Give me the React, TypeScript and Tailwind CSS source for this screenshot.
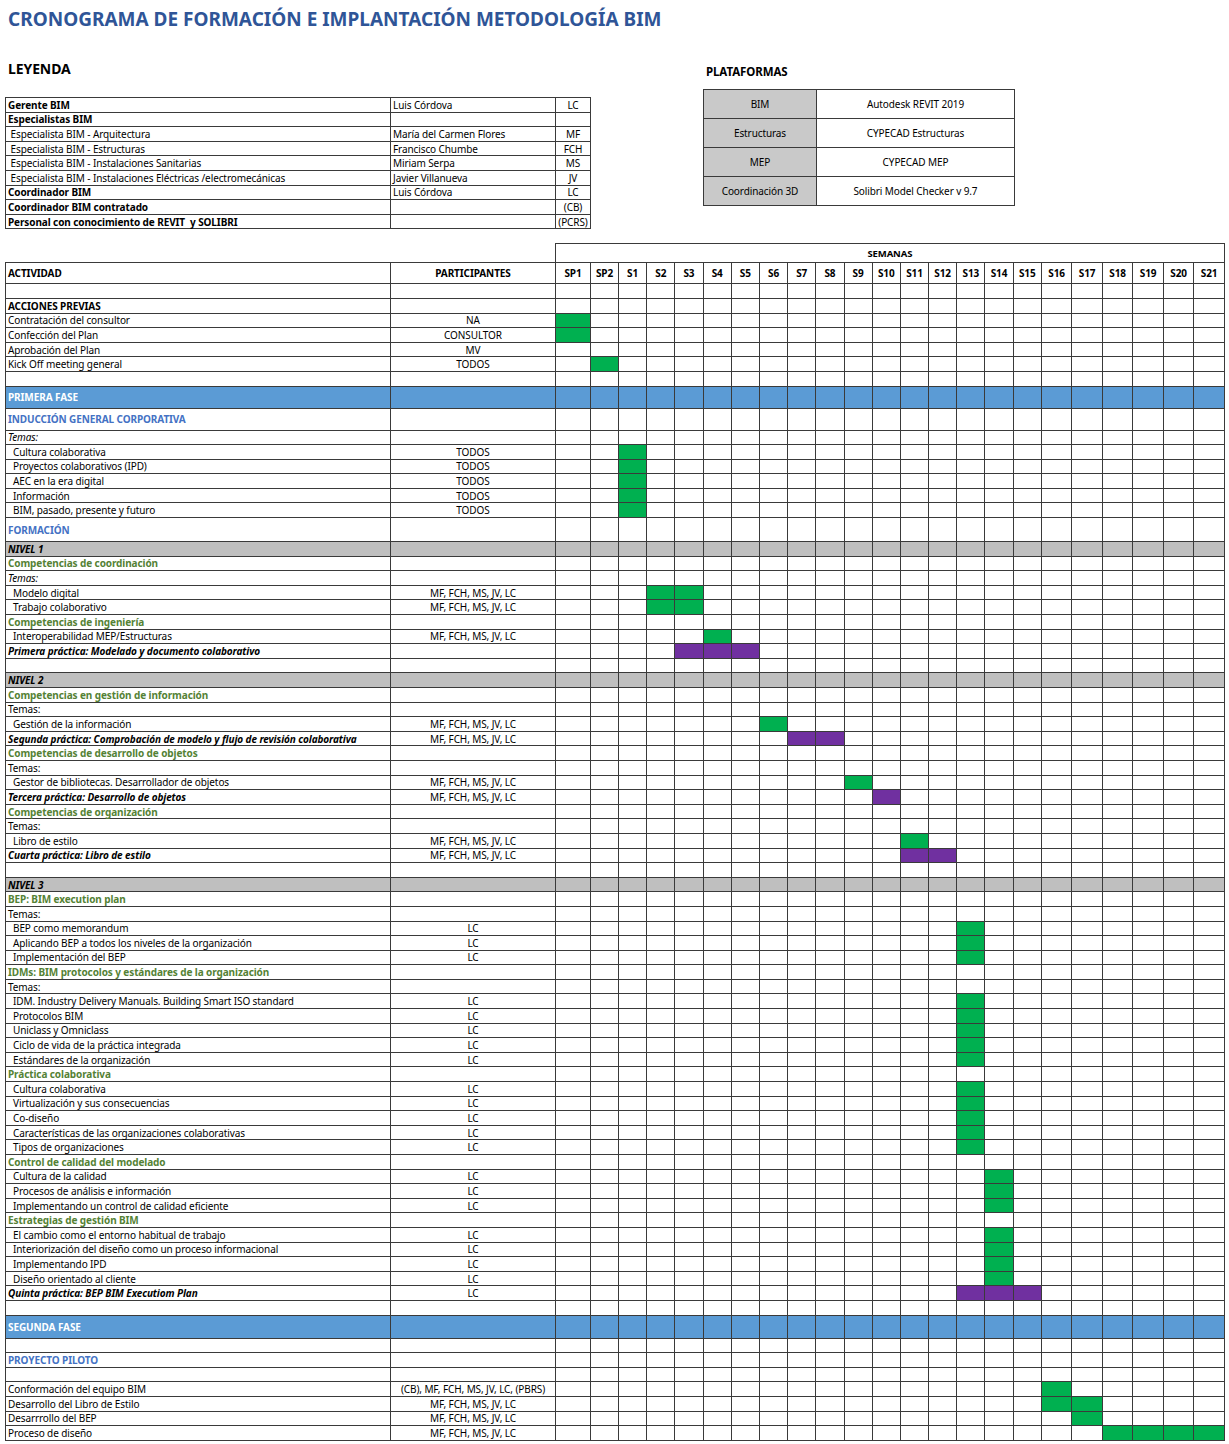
import React from 'react';

type Bar = [number, number, 'g' | 'p'];
type Row = { a?: string; p?: string; k?: string; bars?: Bar[]; h?: string };

// column index: SP1=0, SP2=1, Sn=n+1
const S = (n: number) => n + 1;

const rows: Row[] = [
  {},
  { a: 'ACCIONES PREVIAS', k: 'bold' },
  { a: 'Contratación del consultor', p: 'NA', bars: [[0, 1, 'g']] },
  { a: 'Confección del Plan', p: 'CONSULTOR', bars: [[0, 1, 'g']] },
  { a: 'Aprobación del Plan', p: 'MV' },
  { a: 'Kick Off meeting general', p: 'TODOS', bars: [[1, 1, 'g']] },
  {},
  { a: 'PRIMERA FASE', k: 'fase', h: 'h-[22px]' },
  { a: 'INDUCCIÓN GENERAL CORPORATIVA', k: 'sect', h: 'h-[22px]' },
  { a: 'Temas:', k: 'ital' },
  { a: 'Cultura colaborativa', p: 'TODOS', k: 'ind', bars: [[S(1), 1, 'g']] },
  { a: 'Proyectos colaborativos (IPD)', p: 'TODOS', k: 'ind', bars: [[S(1), 1, 'g']] },
  { a: 'AEC en la era digital', p: 'TODOS', k: 'ind', bars: [[S(1), 1, 'g']] },
  { a: 'Información', p: 'TODOS', k: 'ind', bars: [[S(1), 1, 'g']] },
  { a: 'BIM, pasado, presente y futuro', p: 'TODOS', k: 'ind', bars: [[S(1), 1, 'g']] },
  { a: 'FORMACIÓN', k: 'sect', h: 'h-[24px]' },
  { a: 'NIVEL 1', k: 'nivel' },
  { a: 'Competencias de coordinación', k: 'comp' },
  { a: 'Temas:', k: 'ital' },
  { a: 'Modelo digital', p: 'MF, FCH, MS, JV, LC', k: 'ind', bars: [[S(2), 2, 'g']] },
  { a: 'Trabajo colaborativo', p: 'MF, FCH, MS, JV, LC', k: 'ind', bars: [[S(2), 2, 'g']] },
  { a: 'Competencias de ingeniería', k: 'comp' },
  { a: 'Interoperabilidad MEP/Estructuras', p: 'MF, FCH, MS, JV, LC', k: 'ind', bars: [[S(4), 1, 'g']] },
  { a: 'Primera práctica: Modelado y documento colaborativo', k: 'bi', bars: [[S(3), 3, 'p']] },
  {},
  { a: 'NIVEL 2', k: 'nivel' },
  { a: 'Competencias en gestión de información', k: 'comp' },
  { a: 'Temas:' },
  { a: 'Gestión de la información', p: 'MF, FCH, MS, JV, LC', k: 'ind', bars: [[S(6), 1, 'g']] },
  { a: 'Segunda práctica: Comprobación de modelo y flujo de revisión colaborativa', p: 'MF, FCH, MS, JV, LC', k: 'bi', bars: [[S(7), 2, 'p']] },
  { a: 'Competencias de desarrollo de objetos', k: 'comp' },
  { a: 'Temas:' },
  { a: 'Gestor de bibliotecas. Desarrollador de objetos', p: 'MF, FCH, MS, JV, LC', k: 'ind', bars: [[S(9), 1, 'g']] },
  { a: 'Tercera práctica: Desarrollo de objetos', p: 'MF, FCH, MS, JV, LC', k: 'bi', bars: [[S(10), 1, 'p']] },
  { a: 'Competencias de organización', k: 'comp' },
  { a: 'Temas:' },
  { a: 'Libro de estilo', p: 'MF, FCH, MS, JV, LC', k: 'ind', bars: [[S(11), 1, 'g']] },
  { a: 'Cuarta práctica: Libro de estilo', p: 'MF, FCH, MS, JV, LC', k: 'bi', bars: [[S(11), 2, 'p']] },
  {},
  { a: 'NIVEL 3', k: 'nivel' },
  { a: 'BEP: BIM execution plan', k: 'comp' },
  { a: 'Temas:' },
  { a: 'BEP como memorandum', p: 'LC', k: 'ind', bars: [[S(13), 1, 'g']] },
  { a: 'Aplicando BEP a todos los niveles de la organización', p: 'LC', k: 'ind', bars: [[S(13), 1, 'g']] },
  { a: 'Implementación del BEP', p: 'LC', k: 'ind', bars: [[S(13), 1, 'g']] },
  { a: 'IDMs: BIM protocolos y estándares de la organización', k: 'comp' },
  { a: 'Temas:' },
  { a: 'IDM. Industry Delivery Manuals. Building Smart ISO standard', p: 'LC', k: 'ind', bars: [[S(13), 1, 'g']] },
  { a: 'Protocolos BIM', p: 'LC', k: 'ind', bars: [[S(13), 1, 'g']] },
  { a: 'Uniclass y Omniclass', p: 'LC', k: 'ind', bars: [[S(13), 1, 'g']] },
  { a: 'Ciclo de vida de la práctica integrada', p: 'LC', k: 'ind', bars: [[S(13), 1, 'g']] },
  { a: 'Estándares de la organización', p: 'LC', k: 'ind', bars: [[S(13), 1, 'g']] },
  { a: 'Práctica colaborativa', k: 'comp' },
  { a: 'Cultura colaborativa', p: 'LC', k: 'ind', bars: [[S(13), 1, 'g']] },
  { a: 'Virtualización y sus consecuencias', p: 'LC', k: 'ind', bars: [[S(13), 1, 'g']] },
  { a: 'Co-diseño', p: 'LC', k: 'ind', bars: [[S(13), 1, 'g']] },
  { a: 'Características de las organizaciones colaborativas', p: 'LC', k: 'ind', bars: [[S(13), 1, 'g']] },
  { a: 'Tipos de organizaciones', p: 'LC', k: 'ind', bars: [[S(13), 1, 'g']] },
  { a: 'Control de calidad del modelado', k: 'comp' },
  { a: 'Cultura de la calidad', p: 'LC', k: 'ind', bars: [[S(14), 1, 'g']] },
  { a: 'Procesos de análisis e información', p: 'LC', k: 'ind', bars: [[S(14), 1, 'g']] },
  { a: 'Implementando un control de calidad eficiente', p: 'LC', k: 'ind', bars: [[S(14), 1, 'g']] },
  { a: 'Estrategias de gestión BIM', k: 'comp' },
  { a: 'El cambio como el entorno habitual de trabajo', p: 'LC', k: 'ind', bars: [[S(14), 1, 'g']] },
  { a: 'Interiorización del diseño como un proceso informacional', p: 'LC', k: 'ind', bars: [[S(14), 1, 'g']] },
  { a: 'Implementando IPD', p: 'LC', k: 'ind', bars: [[S(14), 1, 'g']] },
  { a: 'Diseño orientado al cliente', p: 'LC', k: 'ind', bars: [[S(14), 1, 'g']] },
  { a: 'Quinta práctica: BEP BIM Executiom Plan', p: 'LC', k: 'bi', bars: [[S(13), 3, 'p']] },
  {},
  { a: 'SEGUNDA FASE', k: 'fase', h: 'h-[23px]' },
  {},
  { a: 'PROYECTO PILOTO', k: 'sect' },
  {},
  { a: 'Conformación del equipo BIM', p: '(CB), MF, FCH, MS, JV, LC, (PBRS)', bars: [[S(16), 1, 'g']] },
  { a: 'Desarrollo del Libro de Estilo', p: 'MF, FCH, MS, JV, LC', bars: [[S(16), 2, 'g']] },
  { a: 'Desarrrollo del BEP', p: 'MF, FCH, MS, JV, LC', bars: [[S(17), 1, 'g']] },
  { a: 'Proceso de diseño', p: 'MF, FCH, MS, JV, LC', bars: [[S(18), 4, 'g']] },
];

const weeks = ['SP1', 'SP2', ...Array.from({ length: 21 }, (_, i) => `S${i + 1}`)];
const weekW = (i: number) => (i === 0 ? 'w-[35px]' : i === 1 ? 'w-[28px]' : i < 17 ? 'w-[28.2px]' : 'w-[30.5px]');

const labelClass = (k?: string) => {
  switch (k) {
    case 'bold': return 'font-bold';
    case 'ital': return 'italic';
    case 'ind': return 'pl-[7px]';
    case 'bi': return 'font-bold italic';
    case 'fase': return 'font-bold text-white';
    case 'sect': return 'font-bold text-[#4472c4]';
    case 'nivel': return 'font-bold italic';
    case 'comp': return 'font-bold text-[#548235]';
    default: return '';
  }
};

const legend = [
  ['Gerente BIM', 'Luis Córdova', 'LC', true],
  ['Especialistas BIM', '', '', true],
  [' Especialista BIM - Arquitectura', 'María del Carmen Flores', 'MF', false],
  [' Especialista BIM - Estructuras', 'Francisco Chumbe', 'FCH', false],
  [' Especialista BIM - Instalaciones Sanitarias', 'Miriam Serpa', 'MS', false],
  [' Especialista BIM - Instalaciones Eléctricas /electromecánicas', 'Javier Villanueva', 'JV', false],
  ['Coordinador BIM', 'Luis Córdova', 'LC', true],
  ['Coordinador BIM contratado', '', '(CB)', true],
  ['Personal con conocimiento de REVIT  y SOLIBRI', '', '(PCRS)', true],
] as const;

const platforms = [
  ['BIM', 'Autodesk REVIT 2019'],
  ['Estructuras', 'CYPECAD Estructuras'],
  ['MEP', 'CYPECAD MEP'],
  ['Coordinación 3D', 'Solibri Model Checker v 9.7'],
];

const App: React.FC = () => {
  const cell = 'border border-[#3a3a3a] p-0';
  return (
    <div className="w-[1229px] min-h-[1444px] bg-white text-black text-[10px] leading-none font-['Lato','Open_Sans',sans-serif] tracking-[-0.1px]">
      <h1 className="pl-[8px] pt-[10px] h-[40px] text-[19px] font-bold text-[#2f5597] font-['Liberation_Sans',Arial,sans-serif] tracking-normal">
        CRONOGRAMA DE FORMACIÓN E IMPLANTACIÓN METODOLOGÍA BIM
      </h1>
      <div className="flex mt-[22px]">
        <div className="pl-[5px]">
          <div className="pl-[3px] h-[35px] text-[14px] font-bold">LEYENDA</div>
          <table className="border-collapse table-fixed">
            <tbody>
              {legend.map(([a, b, c, bold], i) => (
                <tr key={i} className="h-[14.6px]">
                  <td className={`${cell} w-[385px] pl-[2px] whitespace-pre ${bold ? 'font-bold' : ''}`}>{a}</td>
                  <td className={`${cell} w-[165px] pl-[2px]`}>{b}</td>
                  <td className={`${cell} w-[35px] text-center`}>{c}</td>
                </tr>
              ))}
            </tbody>
          </table>
        </div>
        <div className="ml-[112px]">
          <div className="pl-[3px] h-[27px] pt-[4px] text-[11.5px] font-bold">PLATAFORMAS</div>
          <table className="border-collapse table-fixed">
            <tbody>
              {platforms.map(([a, b]) => (
                <tr key={a} className="h-[29px]">
                  <td className={`${cell} w-[113px] text-center bg-[#c9c9c9]`}>{a}</td>
                  <td className={`${cell} w-[198px] text-center`}>{b}</td>
                </tr>
              ))}
            </tbody>
          </table>
        </div>
      </div>
      <table className="ml-[5px] mt-[14px] border-collapse table-fixed">
        <colgroup>
          <col className="w-[385px]" />
          <col className="w-[165px]" />
          {weeks.map((w, i) => <col key={w} className={weekW(i)} />)}
        </colgroup>
        <tbody>
          <tr className="h-[19px]">
            <td className="p-0" />
            <td className="p-0" />
            <td colSpan={23} className={`${cell} text-center font-bold text-[9.5px]`}>SEMANAS</td>
          </tr>
          <tr className="h-[21px] font-bold">
            <td className={`${cell} pl-[2px]`}>ACTIVIDAD</td>
            <td className={`${cell} text-center`}>PARTICIPANTES</td>
            {weeks.map((w) => <td key={w} className={`${cell} text-center`}>{w}</td>)}
          </tr>
          {rows.map((r, ri) => {
            const bg = r.k === 'fase' ? 'bg-[#5b9bd5]' : r.k === 'nivel' ? 'bg-[#bfbfbf]' : '';
            const fill = (i: number) => {
              const b = r.bars?.find(([s, n]) => i >= s && i < s + n);
              if (!b) return bg;
              return b[2] === 'g' ? 'bg-[#00b050]' : 'bg-[#7030a0]';
            };
            return (
              <tr key={ri} className={r.h ?? 'h-[14.6px]'}>
                <td className={`${cell} pl-[2px] whitespace-nowrap ${bg} ${labelClass(r.k)}`}>{r.a}</td>
                <td className={`${cell} text-center whitespace-nowrap ${bg}`}>{r.p}</td>
                {weeks.map((w, i) => <td key={w} className={`${cell} ${fill(i)}`} />)}
              </tr>
            );
          })}
        </tbody>
      </table>
    </div>
  );
};

export default App;
